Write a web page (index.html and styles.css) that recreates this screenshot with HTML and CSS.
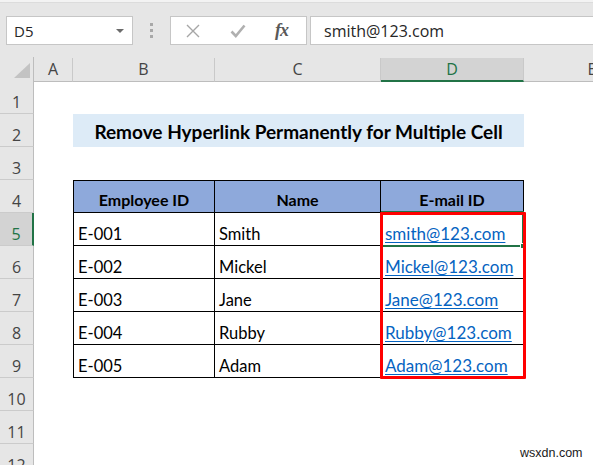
FILE: index.html
```html
<!DOCTYPE html>
<html lang="en">
<head>
<meta charset="utf-8">
<title>Remove Hyperlink</title>
<link rel="stylesheet" href="styles.css">
</head>
<body>
<div class="app">
  <div class="topband"></div>
  <div class="toolbar">
    <div class="namebox"><span class="nb-text">D5</span><span class="caret"></span></div>
    <div class="dots"><i></i><i></i><i></i></div>
    <div class="fbtns">
      <svg class="ic-x" width="14" height="14" viewBox="0 0 14 14"><path d="M1 1L13 13M13 1L1 13" stroke="#a6a6a6" stroke-width="1.4" fill="none"/></svg>
      <svg class="ic-check" width="16" height="14" viewBox="0 0 16 14"><path d="M1.5 7.5L5.8 12L14.5 1.5" stroke="#b0b0b0" stroke-width="2.6" fill="none"/></svg>
      <span class="fx">fx</span>
    </div>
    <div class="finput">smith@123.com</div>
  </div>

  <div class="sheet">
    <div class="row colhead">
      <div class="corner"><svg width="16" height="15" viewBox="0 0 16 15"><path d="M16 0V15H0Z" fill="#c3c3c3"/></svg></div>
      <div class="ch">A</div>
      <div class="ch">B</div>
      <div class="ch">C</div>
      <div class="ch sel">D</div>
      <div class="ch last">E</div>
    </div>

    <div class="row"><div class="rh">1</div></div>
    <div class="row"><div class="rh">2</div><div class="c"></div><div class="c title">Remove Hyperlink Permanently for Multiple Cell</div></div>
    <div class="row"><div class="rh">3</div></div>
    <div class="row"><div class="rh">4</div><div class="c"></div>
      <div class="c t tl tt head">Employee ID</div>
      <div class="c t tt head">Name</div>
      <div class="c t tt head">E-mail ID</div>
    </div>
    <div class="row"><div class="rh sel">5</div><div class="c"></div>
      <div class="c t tl">E-001</div><div class="c t">Smith</div><div class="c t"><span class="link">smith@123.com</span></div>
    </div>
    <div class="row"><div class="rh">6</div><div class="c"></div>
      <div class="c t tl">E-002</div><div class="c t">Mickel</div><div class="c t"><span class="link">Mickel@123.com</span></div>
    </div>
    <div class="row"><div class="rh">7</div><div class="c"></div>
      <div class="c t tl">E-003</div><div class="c t">Jane</div><div class="c t"><span class="link">Jane@123.com</span></div>
    </div>
    <div class="row"><div class="rh">8</div><div class="c"></div>
      <div class="c t tl">E-004</div><div class="c t">Rubby</div><div class="c t"><span class="link">Rubby@123.com</span></div>
    </div>
    <div class="row"><div class="rh">9</div><div class="c"></div>
      <div class="c t tl">E-005</div><div class="c t">Adam</div><div class="c t"><span class="link">Adam@123.com</span></div>
    </div>
    <div class="row"><div class="rh">10</div></div>
    <div class="row"><div class="rh">11</div></div>
    <div class="row"><div class="rh">12</div></div>

    <div class="selection"><span class="handle"></span></div>
    <div class="redbox"></div>
  </div>

  <div class="watermark">wsxdn.com</div>
</div>
</body>
</html>
```

FILE: styles.css
```css
* { box-sizing: border-box; }
html, body { margin: 0; padding: 0; }
body {
  width: 593px;
  height: 465px;
  overflow: hidden;
  background: #e6e6e6;
  font-family: "Lato", "Liberation Sans", sans-serif;
}
.app {
  position: relative;
  width: 593px;
  height: 465px;
  overflow: hidden;
  display: flex;
  flex-direction: column;
}
.app > * { flex-shrink: 0; }
.topband {
  height: 3px;
  background: #f3f3f3;
  border-bottom: 1px solid #dcdcdc;
}
.toolbar {
  height: 54px;
  padding-top: 13px;
  display: flex;
  align-items: flex-start;
}
.namebox {
  margin-left: 6px;
  width: 127px;
  height: 29px;
  background: #fff;
  border: 1px solid #c6c6c6;
  display: flex;
  align-items: center;
  justify-content: space-between;
  padding: 0 7px 0 7px;
  font-family: "Open Sans", "Noto Sans", sans-serif;
  font-size: 15px;
  color: #262626;
}
.caret {
  width: 0; height: 0;
  border-left: 4px solid transparent;
  border-right: 4px solid transparent;
  border-top: 4px solid #6b6b6b;
  margin-right: 1px;
}
.dots {
  margin-left: 17px;
  margin-top: 7px;
  width: 3px;
  display: flex;
  flex-direction: column;
  gap: 3px;
}
.dots i {
  display: block;
  width: 3px; height: 3px;
  background: #a8a8a8;
}
.fbtns {
  margin-left: 17px;
  width: 137px;
  height: 29px;
  background: #fff;
  border: 1px solid #c6c6c6;
  display: flex;
  align-items: center;
  padding-left: 15px;
}
.ic-check { margin-left: 30px; }
.fx {
  margin-left: 29px;
  font-family: "Liberation Serif", serif;
  font-style: italic;
  font-weight: bold;
  font-size: 18px;
  color: #595959;
  letter-spacing: -1px;
}
.finput {
  margin-left: 3px;
  flex: 1;
  height: 29px;
  background: #fff;
  border: 1px solid #c6c6c6;
  border-right: none;
  padding-left: 13px;
  display: flex;
  align-items: center;
  font-family: "Open Sans", "Noto Sans", sans-serif;
  font-size: 16px;
  color: #262626;
}

.sheet {
  position: relative;
  background: #fff;
  flex: 1 0 auto;
  overflow: hidden;
}
.row {
  display: grid;
  grid-template-columns: 34px 39px 142px 166px 143px 136px;
  height: 33px;
}
.colhead {
  height: 24px;
  background: #e6e6e6;
}
.corner {
  background: #e6e6e6;
  border-right: 1px solid #bdbdbd;
  border-bottom: 1px solid #bdbdbd;
  display: flex;
  align-items: flex-end;
  justify-content: flex-end;
  padding: 0 3px 3px 0;
}
.ch {
  background: #e6e6e6;
  border-right: 1px solid #c9c9c9;
  border-bottom: 1px solid #bdbdbd;
  font-family: "Open Sans", "Noto Sans", sans-serif;
  font-size: 16px;
  line-height: 22px;
  color: #444;
  text-align: center;
  margin-top: 1px;
}
.ch.last { border-right: none; }
.ch.sel {
  background: #d3d3d3;
  color: #217346;
  border-bottom: 2px solid #217346;
}
.rh {
  background: #e6e6e6;
  border-right: 1px solid #bdbdbd;
  border-bottom: 1px solid #cbcbcb;
  font-family: "Open Sans", "Noto Sans", sans-serif;
  font-size: 16px;
  line-height: 20px;
  color: #444;
  display: flex;
  align-items: flex-end;
  justify-content: center;
  padding-bottom: 1px;
}
.rh.sel {
  background: #d3d3d3;
  color: #217346;
  border-right: 2px solid #217346;
}
.c {
  font-size: 16.5px;
  line-height: 20px;
  color: #000;
  display: flex;
  align-items: flex-end;
  padding: 0 0 1px 4px;
  white-space: nowrap;
}
.t {
  border-right: 1px solid #000;
  border-bottom: 1px solid #000;
}
.tl { border-left: 1px solid #000; }
.tt { border-top: 1px solid #000; }
.head {
  background: #8ea9db;
  font-weight: bold;
  font-size: 16px;
  justify-content: center;
  padding: 0 0 2px 0;
}
.title {
  grid-column: span 3;
  background: #ddebf7;
  font-weight: bold;
  font-size: 19px;
  justify-content: center;
  align-items: center;
  padding: 2px 0 0 0;
}
.link {
  color: #0563c1;
  text-decoration: underline;
  text-underline-offset: 2px;
  font-size: 17px;
}

.selection {
  position: absolute;
  left: 381px;
  top: 154px;
  width: 143px;
  height: 36px;
  border: 2px solid #217346;
}
.handle {
  position: absolute;
  right: -4px;
  bottom: -4px;
  width: 6px;
  height: 6px;
  background: #217346;
  border: 1px solid #fff;
}
.redbox {
  position: absolute;
  left: 380px;
  top: 155px;
  width: 146px;
  height: 167px;
  border: 3px solid #ff0000;
  border-radius: 1px;
}
.watermark {
  position: absolute;
  left: 520px;
  top: 446px;
  font-family: "Liberation Sans", Arial, sans-serif;
  font-size: 12.5px;
  color: #1a1a1a;
}
```
